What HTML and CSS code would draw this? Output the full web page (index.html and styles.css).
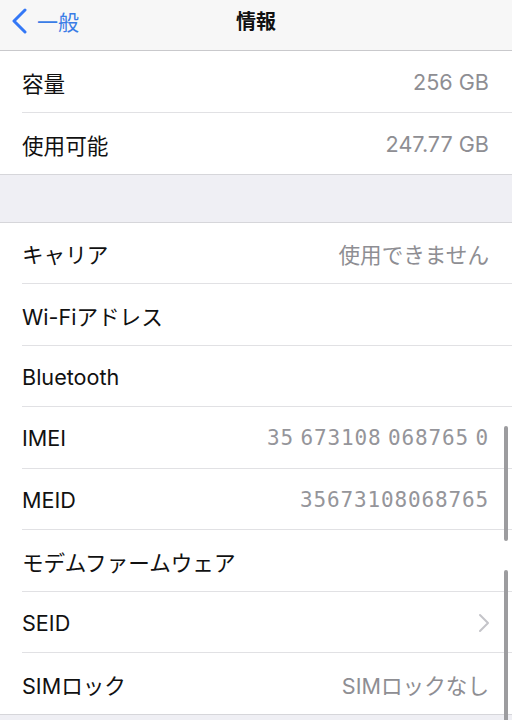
FILE: index.html
```html
<!DOCTYPE html>
<html lang="ja">
<head>
<meta charset="utf-8">
<link rel="stylesheet" href="styles.css">
</head>
<body>
<div class="screen">
  <header class="nav">
    <div class="back">
      <svg class="back-icon" width="18" height="26" viewBox="0 0 18 26"><path d="M14 2 L3 13 L14 24" fill="none" stroke="#3478f6" stroke-width="3" stroke-linecap="round" stroke-linejoin="round"/></svg>
      <span class="back-label">一般</span>
    </div>
    <div class="title">情報</div>
  </header>

  <section class="group first">
    <div class="row"><div class="cell"><span class="label">容量</span><span class="value">256 GB</span></div></div>
    <div class="row"><div class="cell last"><span class="label">使用可能</span><span class="value">247.77 GB</span></div></div>
  </section>

  <div class="spacer"></div>

  <section class="group">
    <div class="row"><div class="cell"><span class="label">キャリア</span><span class="value">使用できません</span></div></div>
    <div class="row"><div class="cell"><span class="label">Wi-Fiアドレス</span><span class="value"></span></div></div>
    <div class="row"><div class="cell"><span class="label">Bluetooth</span><span class="value"></span></div></div>
    <div class="row"><div class="cell"><span class="label">IMEI</span><span class="value mono spaced">35 673108 068765 0</span></div></div>
    <div class="row"><div class="cell"><span class="label">MEID</span><span class="value mono">35673108068765</span></div></div>
    <div class="row"><div class="cell"><span class="label">モデムファームウェア</span><span class="value"></span></div></div>
    <div class="row"><div class="cell"><span class="label">SEID</span><svg class="chev" width="12" height="20" viewBox="0 0 12 20"><path d="M2 2 L10 10 L2 18" fill="none" stroke="#c4c4c9" stroke-width="2" stroke-linecap="round" stroke-linejoin="round"/></svg></div></div>
    <div class="row"><div class="cell last"><span class="label">SIMロック</span><span class="value">SIMロックなし</span></div></div>
  </section>

  <div class="bottom"></div>

  <div class="scroll s1"></div>
  <div class="scroll s2"></div>
</div>
</body>
</html>
```

FILE: styles.css
```css
html, body {
  margin: 0;
  padding: 0;
  background: #ffffff;
}
body {
  font-family: "Inter", "Noto Sans CJK JP", sans-serif;
  color: #111111;
  -webkit-font-smoothing: antialiased;
}
.screen {
  position: relative;
  width: 512px;
  height: 720px;
  overflow: hidden;
  background: #ffffff;
}
.nav {
  position: relative;
  height: 50px;
  background: #f7f7f7;
  border-bottom: 1px solid #c9c9cc;
  display: flex;
  align-items: center;
  justify-content: center;
}
.back {
  position: absolute;
  left: 11px;
  top: 8px;
  display: flex;
  align-items: center;
  gap: 8px;
  height: 26px;
}
.back-label {
  color: #3a7de6;
  font-size: 21px;
  font-family: "Noto Sans CJK JP", sans-serif;
  font-weight: 400;
  line-height: 26px;
}
.title {
  font-family: "Noto Sans CJK JP", sans-serif;
  font-weight: 700;
  font-size: 20px;
  margin-top: -10px;
  color: #111;
}
.group {
  background: #ffffff;
  border-bottom: 1px solid #d6d6da;
}
.spacer + .group {
  border-top: 1px solid #d6d6da;
}
.row {
  padding-left: 22px;
  background: #ffffff;
}
.cell {
  height: 61.5px;
  box-sizing: border-box;
  display: flex;
  align-items: center;
  justify-content: space-between;
  padding-right: 23px;
  padding-top: 2px;
  border-bottom: 1px solid #e1e1e4;
}
.cell.last {
  border-bottom: none;
  height: 61px;
}
.label {
  font-size: 21.6px;
  font-weight: 400;
  color: #111111;
}
.value {
  font-size: 21.6px;
  color: #8e8e93;
  font-weight: 400;
}
.mono {
  font-family: "DejaVu Sans Mono", monospace;
  font-size: 21px;
  letter-spacing: 0.85px;
  color: #95959a;
}
.spaced {
  word-spacing: -7px;
}
.chev {
  margin-right: -1px;
}
.spacer {
  height: 47px;
  background: #efeff4;
}
.bottom {
  height: 20px;
  background: #efeff4;
}
.scroll {
  position: absolute;
  left: 504px;
  width: 4px;
  border-radius: 2px;
  background: #9c9c9f;
}
.s1 {
  top: 426px;
  height: 115px;
}
.s2 {
  top: 570px;
  height: 160px;
}
```
